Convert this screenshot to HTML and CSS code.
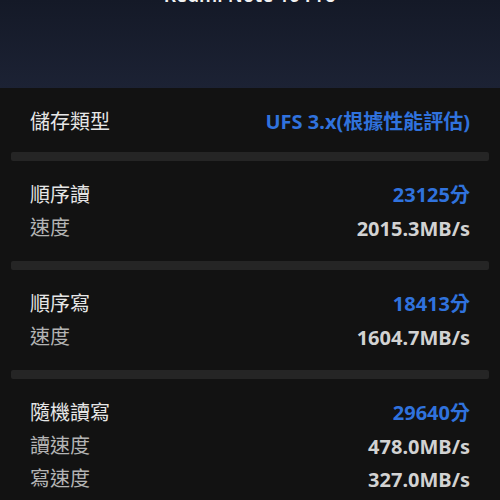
FILE: index.html
```html
<!DOCTYPE html>
<html lang="zh-Hant">

<head>
    <meta charset="UTF-8">
    <meta name="viewport" content="width=device-width, initial-scale=1.0">
    <title>儲存測試</title>
    <link rel="stylesheet" href="styles.css">
</head>

<body>
    <header class="top">
        <div class="model">Redmi Note 10 Pro</div>
    </header>

    <section class="group">
        <div class="row">
            <span class="label">儲存類型</span>
            <span class="score">UFS 3.x(根據性能評估)</span>
        </div>
    </section>
    <div class="gap"></div>

    <section class="group">
        <div class="row">
            <span class="label">順序讀</span>
            <span class="score">23125分</span>
        </div>
        <div class="row">
            <span class="label sub">速度</span>
            <span class="value">2015.3MB/s</span>
        </div>
    </section>
    <div class="gap"></div>

    <section class="group">
        <div class="row">
            <span class="label">順序寫</span>
            <span class="score">18413分</span>
        </div>
        <div class="row">
            <span class="label sub">速度</span>
            <span class="value">1604.7MB/s</span>
        </div>
    </section>
    <div class="gap"></div>

    <section class="group">
        <div class="row">
            <span class="label">隨機讀寫</span>
            <span class="score">29640分</span>
        </div>
        <div class="row">
            <span class="label sub">讀速度</span>
            <span class="value">478.0MB/s</span>
        </div>
        <div class="row">
            <span class="label sub">寫速度</span>
            <span class="value">327.0MB/s</span>
        </div>
    </section>
</body>

</html>
```

FILE: styles.css
```css
html,
body {
    margin: 0;
    background-color: #121212;
    font-family: "Noto Sans", "Noto Sans CJK TC", sans-serif;
    overflow: hidden;
}

.top {
    height: 88px;
    background: linear-gradient(180deg, #141927 0%, #1c2234 100%);
    overflow: hidden;
}

.model {
    margin-top: -17px;
    text-align: center;
    color: #f2f2f2;
    font-size: 19px;
    font-weight: 600;
    line-height: 24px;
}

.group {
    padding: 16px 30px 18px;
}

.group:first-of-type {
    padding-bottom: 15px;
}

.row {
    height: 33px;
    display: flex;
    justify-content: space-between;
    align-items: center;
}

.label {
    color: #e6e6e6;
    font-size: 20px;
}

.label.sub {
    color: #b4b4b4;
}

.score {
    color: #3072dd;
    font-size: 20px;
    font-weight: 700;
}

.value {
    color: #d2d2d2;
    font-size: 20px;
    font-weight: 700;
    padding-top: 3px;
}

.gap {
    height: 9px;
    margin: 0 11px;
    background-color: #252525;
    border-radius: 2px;
}
```
